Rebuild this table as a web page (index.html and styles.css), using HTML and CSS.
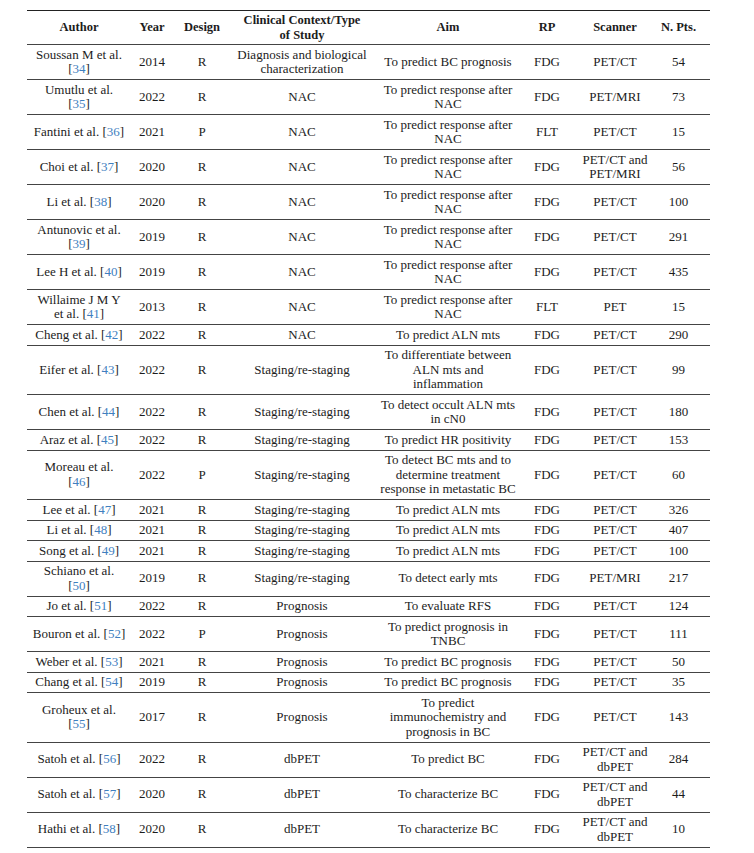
FILE: index.html
```html
<!DOCTYPE html>
<html>
<head>
<meta charset="utf-8">
<link rel="stylesheet" href="styles.css">
</head>
<body>
<table class="studies">
  <colgroup>
    <col class="c-author"><col class="c-year"><col class="c-design"><col class="c-context"><col class="c-aim"><col class="c-rp"><col class="c-scanner"><col class="c-pts">
  </colgroup>
  <thead>
    <tr>
      <th>Author</th><th>Year</th><th>Design</th><th>Clinical Context/Type<br>of Study</th><th>Aim</th><th>RP</th><th>Scanner</th><th class="pts">N. Pts.</th>
    </tr>
  </thead>
  <tbody>
    <tr><td>Soussan M et al.<br><a class="ref">[<span>34</span>]</a></td><td>2014</td><td>R</td><td>Diagnosis and biological<br>characterization</td><td>To predict BC prognosis</td><td>FDG</td><td>PET/CT</td><td class="pts">54</td></tr>
    <tr><td>Umutlu et al.<br><a class="ref">[<span>35</span>]</a></td><td>2022</td><td>R</td><td>NAC</td><td>To predict response after<br>NAC</td><td>FDG</td><td>PET/MRI</td><td class="pts">73</td></tr>
    <tr><td>Fantini et al. <a class="ref">[<span>36</span>]</a></td><td>2021</td><td>P</td><td>NAC</td><td>To predict response after<br>NAC</td><td>FLT</td><td>PET/CT</td><td class="pts">15</td></tr>
    <tr><td>Choi et al. <a class="ref">[<span>37</span>]</a></td><td>2020</td><td>R</td><td>NAC</td><td>To predict response after<br>NAC</td><td>FDG</td><td>PET/CT and<br>PET/MRI</td><td class="pts">56</td></tr>
    <tr><td>Li et al. <a class="ref">[<span>38</span>]</a></td><td>2020</td><td>R</td><td>NAC</td><td>To predict response after<br>NAC</td><td>FDG</td><td>PET/CT</td><td class="pts">100</td></tr>
    <tr><td>Antunovic et al.<br><a class="ref">[<span>39</span>]</a></td><td>2019</td><td>R</td><td>NAC</td><td>To predict response after<br>NAC</td><td>FDG</td><td>PET/CT</td><td class="pts">291</td></tr>
    <tr><td>Lee H et al. <a class="ref">[<span>40</span>]</a></td><td>2019</td><td>R</td><td>NAC</td><td>To predict response after<br>NAC</td><td>FDG</td><td>PET/CT</td><td class="pts">435</td></tr>
    <tr><td>Willaime J M Y<br>et al. <a class="ref">[<span>41</span>]</a></td><td>2013</td><td>R</td><td>NAC</td><td>To predict response after<br>NAC</td><td>FLT</td><td>PET</td><td class="pts">15</td></tr>
    <tr><td>Cheng et al. <a class="ref">[<span>42</span>]</a></td><td>2022</td><td>R</td><td>NAC</td><td>To predict ALN mts</td><td>FDG</td><td>PET/CT</td><td class="pts">290</td></tr>
    <tr><td>Eifer et al. <a class="ref">[<span>43</span>]</a></td><td>2022</td><td>R</td><td>Staging/re-staging</td><td>To differentiate between<br>ALN mts and<br>inflammation</td><td>FDG</td><td>PET/CT</td><td class="pts">99</td></tr>
    <tr><td>Chen et al. <a class="ref">[<span>44</span>]</a></td><td>2022</td><td>R</td><td>Staging/re-staging</td><td>To detect occult ALN mts<br>in cN0</td><td>FDG</td><td>PET/CT</td><td class="pts">180</td></tr>
    <tr><td>Araz et al. <a class="ref">[<span>45</span>]</a></td><td>2022</td><td>R</td><td>Staging/re-staging</td><td>To predict HR positivity</td><td>FDG</td><td>PET/CT</td><td class="pts">153</td></tr>
    <tr><td>Moreau et al.<br><a class="ref">[<span>46</span>]</a></td><td>2022</td><td>P</td><td>Staging/re-staging</td><td>To detect BC mts and to<br>determine treatment<br>response in metastatic BC</td><td>FDG</td><td>PET/CT</td><td class="pts">60</td></tr>
    <tr><td>Lee et al. <a class="ref">[<span>47</span>]</a></td><td>2021</td><td>R</td><td>Staging/re-staging</td><td>To predict ALN mts</td><td>FDG</td><td>PET/CT</td><td class="pts">326</td></tr>
    <tr><td>Li et al. <a class="ref">[<span>48</span>]</a></td><td>2021</td><td>R</td><td>Staging/re-staging</td><td>To predict ALN mts</td><td>FDG</td><td>PET/CT</td><td class="pts">407</td></tr>
    <tr><td>Song et al. <a class="ref">[<span>49</span>]</a></td><td>2021</td><td>R</td><td>Staging/re-staging</td><td>To predict ALN mts</td><td>FDG</td><td>PET/CT</td><td class="pts">100</td></tr>
    <tr><td>Schiano et al.<br><a class="ref">[<span>50</span>]</a></td><td>2019</td><td>R</td><td>Staging/re-staging</td><td>To detect early mts</td><td>FDG</td><td>PET/MRI</td><td class="pts">217</td></tr>
    <tr><td>Jo et al. <a class="ref">[<span>51</span>]</a></td><td>2022</td><td>R</td><td>Prognosis</td><td>To evaluate RFS</td><td>FDG</td><td>PET/CT</td><td class="pts">124</td></tr>
    <tr><td>Bouron et al. <a class="ref">[<span>52</span>]</a></td><td>2022</td><td>P</td><td>Prognosis</td><td>To predict prognosis in<br>TNBC</td><td>FDG</td><td>PET/CT</td><td class="pts">111</td></tr>
    <tr><td>Weber et al. <a class="ref">[<span>53</span>]</a></td><td>2021</td><td>R</td><td>Prognosis</td><td>To predict BC prognosis</td><td>FDG</td><td>PET/CT</td><td class="pts">50</td></tr>
    <tr><td>Chang et al. <a class="ref">[<span>54</span>]</a></td><td>2019</td><td>R</td><td>Prognosis</td><td>To predict BC prognosis</td><td>FDG</td><td>PET/CT</td><td class="pts">35</td></tr>
    <tr><td>Groheux et al.<br><a class="ref">[<span>55</span>]</a></td><td>2017</td><td>R</td><td>Prognosis</td><td>To predict<br>immunochemistry and<br>prognosis in BC</td><td>FDG</td><td>PET/CT</td><td class="pts">143</td></tr>
    <tr><td>Satoh et al. <a class="ref">[<span>56</span>]</a></td><td>2022</td><td>R</td><td>dbPET</td><td>To predict BC</td><td>FDG</td><td>PET/CT and<br>dbPET</td><td class="pts">284</td></tr>
    <tr><td>Satoh et al. <a class="ref">[<span>57</span>]</a></td><td>2020</td><td>R</td><td>dbPET</td><td>To characterize BC</td><td>FDG</td><td>PET/CT and<br>dbPET</td><td class="pts">44</td></tr>
    <tr><td>Hathi et al. <a class="ref">[<span>58</span>]</a></td><td>2020</td><td>R</td><td>dbPET</td><td>To characterize BC</td><td>FDG</td><td>PET/CT and<br>dbPET</td><td class="pts">10</td></tr>
  </tbody>
</table>
</body>
</html>
```

FILE: styles.css
```css
html, body {
  margin: 0;
  padding: 0;
  background: #ffffff;
}

body {
  padding: 10px 0 0 27px;
  font-family: "Liberation Serif", "Times New Roman", serif;
  font-size: 13px;
  color: #1c1c1c;
}

.studies {
  width: 683px;
  table-layout: fixed;
  border-collapse: collapse;
  border-top: 1px solid #222;
}

.c-author { width: 104px; }
.c-year { width: 42px; }
.c-design { width: 58px; }
.c-context { width: 142px; }
.c-aim { width: 150px; }
.c-rp { width: 48px; }
.c-scanner { width: 88px; }
.c-pts { width: 51px; }

.studies th,
.studies td {
  text-align: center;
  vertical-align: middle;
  line-height: 14.5px;
  padding: 2.5px 0;
  border-bottom: 1px solid #444;
  white-space: nowrap;
}

.studies th {
  font-size: 12.5px;
  font-weight: bold;
  padding: 2px 0;
}

.studies .pts {
  padding-right: 12px;
}

.ref {
  color: #1c1c1c;
  text-decoration: none;
}

.ref span {
  color: #3f7fbf;
}
```
